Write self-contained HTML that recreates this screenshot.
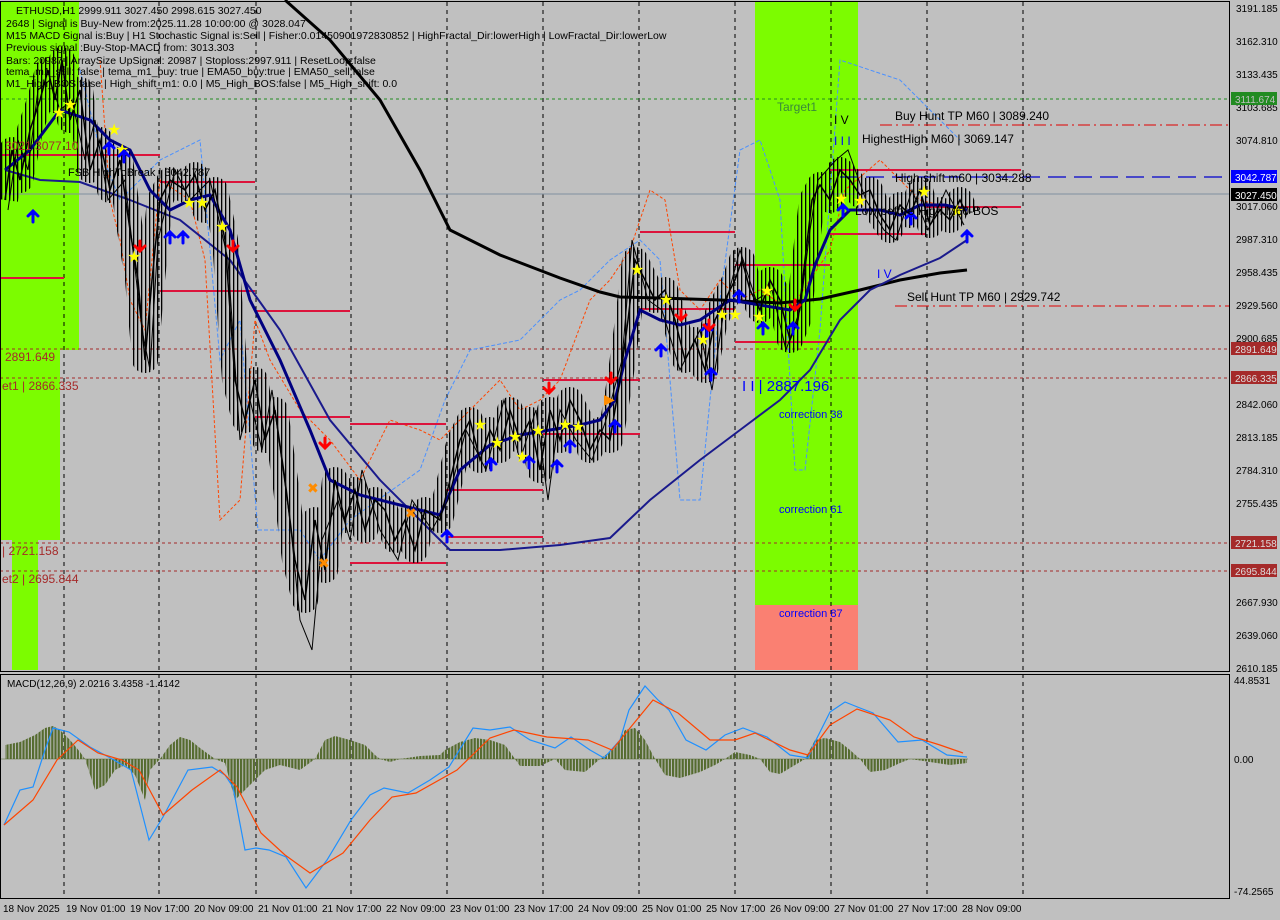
<!DOCTYPE html>
<html><head><meta charset="utf-8"><style>
html,body{margin:0;padding:0;background:#c0c0c0;width:1280px;height:920px;overflow:hidden}
svg{display:block;font-family:"Liberation Sans",sans-serif}
</style></head><body>
<svg width="1280" height="920" viewBox="0 0 1280 920" xmlns="http://www.w3.org/2000/svg">
<defs>
<pattern id="hist" width="3.2" height="4" patternUnits="userSpaceOnUse"><rect width="2.2" height="4" fill="#556b2f"/></pattern>
<pattern id="cdl" width="4" height="6" patternUnits="userSpaceOnUse"><rect x="1" width="1.3" height="6" fill="#000"/></pattern>
</defs>
<rect width="1280" height="920" fill="#c0c0c0"/>
<rect x="0" y="2" width="79" height="348" fill="#7cfc00"/>
<rect x="0" y="350" width="60" height="190" fill="#7cfc00"/>
<rect x="12" y="540" width="26" height="130" fill="#7cfc00"/>
<rect x="755" y="2" width="103" height="603" fill="#7cfc00"/>
<rect x="755" y="605" width="103" height="65" fill="#fa8072"/>
<g stroke="#000" stroke-dasharray="4,4" stroke-width="1">
<path d="M64 2V898M159 2V898M256 2V898M351 2V898M447 2V898M543 2V898M639 2V898M735 2V898M831 2V898M927 2V898M1023 2V898"/>
</g>
<path d="M0 99H1229" stroke="#228b22" stroke-dasharray="3,3"/>
<path d="M0 349H1229M0 378H1229M0 543H1229M0 571H1229" stroke="#a52a2a" stroke-dasharray="3,3"/>
<path d="M840 177H1229" stroke="#0000cc" stroke-width="1.3" stroke-dasharray="18,8"/>
<path d="M0 194H1229" stroke="#8090a0"/>
<path d="M880 125H1229M895 306H1229" stroke="#e00000" stroke-dasharray="12,4,2,4"/>
<polyline fill="none" stroke="#ff4500" stroke-width="1" stroke-dasharray="3,2" points="100,60 110,200 120,240 130,300 145,330 160,180 190,200 205,260 220,520 240,500 255,320 270,360 300,410 330,440 360,480 390,420 420,430 440,440 460,420 480,400 500,380 520,410 540,400 560,380 590,300 610,280 630,250 650,190 665,200 680,290 700,310 720,280 740,300 760,290 790,310 810,280 830,250 845,190 880,160 920,200 960,210"/>
<polyline fill="none" stroke="#4a90ff" stroke-width="1" stroke-dasharray="4,2" points="80,70 100,150 120,200 160,160 200,140 220,360 240,320 258,530 300,530 320,560 350,520 420,470 445,400 470,350 520,340 560,300 580,290 610,260 640,240 660,260 680,500 700,500 720,300 740,150 760,140 780,200 795,470 805,470 820,330 840,60 900,80 960,140"/>
<g stroke="#dc143c" stroke-width="2">
<path d="M0 155H160M0 278H64M160 182H255M160 291H255M255 311H350M255 417H350M350 424H446M350 563H446M446 490H543M446 537H543M543 380H640M543 434H640M640 232H735M640 309H735M735 265H830M735 342H830M830 170H925M830 234H925M925 170H1021M925 207H1021"/>
</g>
<polyline fill="none" stroke="#000" stroke-width="3" points="285,0 330,40 380,100 420,170 450,230 500,255 560,278 600,292 620,297 660,298 720,300 780,303 820,299 860,290 900,280 940,273 967,270"/>
<polyline fill="none" stroke="#1a1a8c" stroke-width="2" points="5,170 40,180 80,182 130,200 180,220 230,260 280,330 330,420 380,480 420,520 450,550 500,550 560,545 610,538 650,500 700,460 740,430 780,400 810,370 840,320 870,290 900,275 940,258 967,240"/>
<!-- candles band -->
<polyline fill="none" stroke="url(#cdl)" stroke-width="26" stroke-linejoin="round" points="5,200 12,150 20,180 30,130 40,100 48,70 55,100 62,60 70,120 80,90 90,170 100,140 110,190 120,160 130,230 138,280 145,360 152,280 160,200 170,180 185,190 195,175 205,210 215,190 225,240 235,380 245,420 255,380 265,440 275,410 285,480 295,560 305,600 315,520 325,570 335,480 345,520 355,490 365,530 375,500 385,510 395,540 405,520 415,550 425,510 440,520 450,480 460,440 470,420 480,460 490,430 500,450 510,410 520,440 530,420 540,470 550,410 560,440 570,400 580,420 590,450 600,430 610,440 620,380 628,320 635,260 645,280 655,300 665,290 675,320 685,360 695,340 705,370 715,320 725,300 735,280 742,260 750,290 760,310 770,280 780,300 790,340 798,320 805,260 812,200 820,185 830,200 840,170 850,180 860,195 870,190 880,215 890,230 900,205 910,215 920,190 930,225 940,210 950,220 960,200 967,215"/>
<polyline fill="none" stroke="#000080" stroke-width="3" points="5,170 30,150 60,110 90,120 110,140 130,150 150,190 170,210 190,200 210,195 230,230 250,300 280,360 310,430 330,480 360,495 400,505 440,515 460,470 490,445 520,435 550,430 580,425 600,420 615,400 625,360 640,310 660,320 680,325 700,320 730,300 760,305 790,310 805,300 815,265 830,230 850,210 880,210 900,215 920,205 945,205 967,210"/>
<polyline fill="none" stroke="#000" stroke-width="1.5" points="5,200 12,150 20,180 30,130 40,100 48,70 55,100 62,60 70,120 80,90 90,170 100,140 110,190 120,160 130,230 138,280 145,360 152,280 160,200 170,180 185,190 195,175 205,210 215,190 225,240 235,380 245,420 255,380 265,440 275,410 285,480 295,560 305,600 315,520 325,570 335,480 345,520 355,490 365,530 375,500 385,510 395,540 405,520 415,550 425,510 440,520 450,480 460,440 470,420 480,460 490,430 500,450 510,410 520,440 530,420 540,470 550,410 560,440 570,400 580,420 590,450 600,430 610,440 620,380 628,320 635,260 645,280 655,300 665,290 675,320 685,360 695,340 705,370 715,320 725,300 735,280 742,260 750,290 760,310 770,280 780,300 790,340 798,320 805,260 812,200 820,185 830,200 840,170 850,180 860,195 870,190 880,215 890,230 900,205 910,215 920,190 930,225 940,210 950,220 960,200 967,215"/>
<polyline fill="none" stroke="#000" stroke-width="1" points="8,210 18,140 28,170 38,90 50,80 60,110 72,100 85,160 95,120 108,200 125,180 142,330 150,370 158,240 175,170 190,200 210,180 228,260 240,440 250,400 262,450 272,390 290,520 300,620 312,650 322,540 338,500 350,540 362,470 380,530 398,560 412,500 432,530 448,500 466,430 486,470 504,400 520,460 536,410 548,500 560,410 576,440 592,460 606,420 622,360 632,240 648,300 662,310 680,370 700,330 712,390 724,310 740,250 756,300 772,290 786,350 800,310 810,230 818,180 836,160 848,150 866,200 884,230 896,240 912,190 928,230 946,190 964,225"/>
<g fill="#ffff00" font-size="16">
<text x="52" y="118">★</text><text x="63" y="110">★</text><text x="107" y="135">★</text><text x="115" y="155">★</text><text x="127" y="262">★</text><text x="182" y="208">★</text><text x="195" y="208">★</text><text x="215" y="232">★</text><text x="473" y="430">★</text><text x="490" y="448">★</text><text x="508" y="442">★</text><text x="515" y="462">★</text><text x="531" y="436">★</text><text x="558" y="430">★</text><text x="571" y="432">★</text><text x="630" y="275">★</text><text x="659" y="305">★</text><text x="696" y="345">★</text><text x="715" y="320">★</text><text x="728" y="320">★</text><text x="752" y="322">★</text><text x="760" y="296">★</text><text x="834" y="204">★</text><text x="853" y="206">★</text><text x="917" y="197">★</text><text x="950" y="216">★</text>
</g>
<g fill="#ff8c00" font-size="14"><text x="307" y="493">✖</text><text x="318" y="568">✖</text><text x="405" y="518">✖</text><text x="604" y="404">▶</text></g>
<g stroke="#0000ff" stroke-width="3" fill="none" stroke-linecap="round">
<path d="M33 222v-10M28 216l5-5 5 5M109 154v-10M104 148l5-5 5 5M124 162v-10M119 156l5-5 5 5M170 243v-10M165 237l5-5 5 5M183 243v-10M178 237l5-5 5 5M447 542v-10M442 536l5-5 5 5M491 470v-10M486 464l5-5 5 5M529 468v-10M524 462l5-5 5 5M557 472v-10M552 466l5-5 5 5M570 452v-10M565 446l5-5 5 5M615 432v-10M610 426l5-5 5 5M661 356v-10M656 350l5-5 5 5M707 336v-10M702 330l5-5 5 5M711 380v-10M706 374l5-5 5 5M739 302v-10M734 296l5-5 5 5M763 334v-10M758 328l5-5 5 5M793 334v-10M788 328l5-5 5 5M843 216v-10M838 210l5-5 5 5M911 224v-10M906 218l5-5 5 5M967 242v-10M962 236l5-5 5 5"/>
</g>
<g stroke="#ff0000" stroke-width="3" fill="none" stroke-linecap="round">
<path d="M140 241v10M135 246l5 5 5-5M233 241v10M228 246l5 5 5-5M325 438v10M320 443l5 5 5-5M549 383v10M544 388l5 5 5-5M611 373v10M606 378l5 5 5-5M681 310v10M676 315l5 5 5-5M709 320v10M704 325l5 5 5-5M795 300v10M790 305l5 5 5-5"/>
</g>
<g font-size="12">
<text x="777" y="111" fill="#3a8a3a">Target1</text>
<text x="834" y="124" fill="#000">I V</text>
<text x="834" y="145" fill="#0000ff">I  I  I</text>
<text x="862" y="143" fill="#000">HighestHigh   M60 | 3069.147</text>
<text x="895" y="120" fill="#000">Buy Hunt TP M60 | 3089.240</text>
<text x="895" y="182" fill="#000">High shift m60 | 3034.288</text>
<text x="855" y="215" fill="#000">Low before High M60-BOS</text>
<text x="877" y="278" fill="#0000ff">I V</text>
<text x="907" y="301" fill="#000">Sell Hunt TP M60 | 2929.742</text>
<text x="742" y="391" fill="#0000ff" font-size="15">I  I | 2887.196</text>
<text x="779" y="418" fill="#0000ff" font-size="11">correction 38</text>
<text x="779" y="513" fill="#0000ff" font-size="11">correction 61</text>
<text x="779" y="617" fill="#0000ff" font-size="11">correction 87</text>
<text x="5" y="361" fill="#a52a2a">2891.649</text>
<text x="2" y="390" fill="#a52a2a">et1 | 2866.335</text>
<text x="2" y="555" fill="#a52a2a">| 2721.158</text>
<text x="2" y="583" fill="#a52a2a">et2 | 2695.844</text>
<text x="5" y="150" fill="#a52a2a">3021 3077.10</text>
<text x="68" y="176" fill="#000" font-size="11">FSB HighToBreak | 3042.787</text>
</g>
<g font-size="10.5" fill="#000">
<text x="16" y="14">ETHUSD,H1  2999.911 3027.450 2998.615 3027.450</text>
<text x="6" y="27">2648 | Signal is Buy-New from:2025.11.28 10:00:00 @ 3028.047</text>
<text x="6" y="39">M15 MACD Signal is:Buy | H1 Stochastic Signal is:Sell | Fisher:0.01450901972830852 | HighFractal_Dir:lowerHigh | LowFractal_Dir:lowerLow</text>
<text x="6" y="51">Previous signal :Buy-Stop-MACD from: 3013.303</text>
<text x="6" y="64">Bars: 20987 | ArraySize UpSignal: 20987 | Stoploss:2997.911 | ResetLoop:false</text>
<text x="6" y="75">tema_m1_sell: false | tema_m1_buy: true | EMA50_buy:true | EMA50_sell:false</text>
<text x="6" y="87">M1_High_BOS:false | High_shift_m1: 0.0 | M5_High_BOS:false | M5_High_shift: 0.0</text>
</g>
<rect x="0.5" y="1.5" width="1229" height="670" fill="none" stroke="#000"/>
<rect x="0.5" y="674.5" width="1229" height="224" fill="none" stroke="#000"/>
<polygon fill="url(#hist)" points="5,759 5,745 20,742 35,735 45,728 53,726 60,730 70,740 80,752 85,759 95,790 105,785 115,770 125,765 135,775 145,800 150,770 160,759 170,745 180,737 190,740 200,748 215,759 225,763 235,800 245,790 255,780 265,770 280,765 300,770 315,759 325,740 335,736 350,740 365,745 375,755 380,759 390,762 400,759 420,756 440,755 445,750 460,742 475,738 490,740 505,745 515,759 520,766 540,766 555,759 565,770 585,772 600,759 615,748 625,730 635,728 645,740 655,759 665,775 680,778 700,772 715,765 725,759 735,752 750,755 760,759 770,772 780,774 795,765 805,759 815,740 825,738 840,742 850,750 860,759 870,772 885,770 900,763 910,759 930,762 950,765 967,763 967,759"/>
<path d="M1 759H968" stroke="#556b2f" stroke-width="0.6"/>
<polyline fill="none" stroke="#1e90ff" stroke-width="1.2" points="4,825 20,790 33,787 45,750 53,728 69,732 90,747 114,760 131,770 149,840 163,817 188,770 212,767 225,775 233,787 245,850 256,848 269,850 286,857 306,888 318,872 327,860 351,820 370,795 384,788 408,793 430,780 449,767 473,728 490,730 510,727 530,740 555,748 571,737 590,750 604,758 620,740 629,710 645,686 658,700 669,710 686,740 706,750 725,735 743,728 767,737 790,755 808,758 816,740 830,712 845,702 860,708 873,713 898,742 922,740 947,755 967,757"/>
<polyline fill="none" stroke="#ff4500" stroke-width="1.2" points="4,825 33,800 57,760 78,740 98,753 122,760 139,770 163,815 192,790 220,770 237,787 261,833 285,855 310,873 343,853 370,820 392,797 416,793 457,770 490,738 514,730 547,737 588,740 612,750 653,700 678,713 710,740 735,740 755,733 790,750 808,755 830,725 857,709 890,720 914,737 940,745 963,753"/>
<text x="7" y="687" font-size="10" fill="#000">MACD(12,26,9) 2.0216 3.4358 -1.4142</text>
<g font-size="10" fill="#000">
<text x="1236" y="12">3191.185</text><text x="1236" y="45">3162.310</text><text x="1236" y="78">3133.435</text><text x="1236" y="111">3103.685</text><text x="1236" y="144">3074.810</text><text x="1236" y="210">3017.060</text><text x="1236" y="243">2987.310</text><text x="1236" y="276">2958.435</text><text x="1236" y="309">2929.560</text><text x="1236" y="342">2900.685</text><text x="1236" y="408">2842.060</text><text x="1236" y="441">2813.185</text><text x="1236" y="474">2784.310</text><text x="1236" y="507">2755.435</text><text x="1236" y="606">2667.930</text><text x="1236" y="639">2639.060</text><text x="1236" y="672">2610.185</text>
<text x="1234" y="684">44.8531</text><text x="1234" y="763">0.00</text><text x="1234" y="895">-74.2565</text>
</g>
<g font-size="10">
<rect x="1231" y="92" width="46" height="13" fill="#228b22"/><text x="1235" y="103" fill="#c0c0c0">3111.674</text>
<rect x="1231" y="170" width="46" height="13" fill="#0000ff"/><text x="1235" y="181" fill="#fff">3042.787</text>
<rect x="1231" y="188" width="46" height="13" fill="#000"/><text x="1235" y="199" fill="#fff">3027.450</text>
<rect x="1231" y="342" width="46" height="13" fill="#a52a2a"/><text x="1235" y="353" fill="#ddd">2891.649</text>
<rect x="1231" y="371" width="46" height="13" fill="#a52a2a"/><text x="1235" y="382" fill="#ddd">2866.335</text>
<rect x="1231" y="536" width="46" height="13" fill="#a52a2a"/><text x="1235" y="547" fill="#ddd">2721.158</text>
<rect x="1231" y="564" width="46" height="13" fill="#a52a2a"/><text x="1235" y="575" fill="#ddd">2695.844</text>
</g>
<g font-size="10" fill="#000">
<text x="3" y="912">18 Nov 2025</text><text x="66" y="912">19 Nov 01:00</text><text x="130" y="912">19 Nov 17:00</text><text x="194" y="912">20 Nov 09:00</text><text x="258" y="912">21 Nov 01:00</text><text x="322" y="912">21 Nov 17:00</text><text x="386" y="912">22 Nov 09:00</text><text x="450" y="912">23 Nov 01:00</text><text x="514" y="912">23 Nov 17:00</text><text x="578" y="912">24 Nov 09:00</text><text x="642" y="912">25 Nov 01:00</text><text x="706" y="912">25 Nov 17:00</text><text x="770" y="912">26 Nov 09:00</text><text x="834" y="912">27 Nov 01:00</text><text x="898" y="912">27 Nov 17:00</text><text x="962" y="912">28 Nov 09:00</text>
</g>
</svg>
</body></html>
